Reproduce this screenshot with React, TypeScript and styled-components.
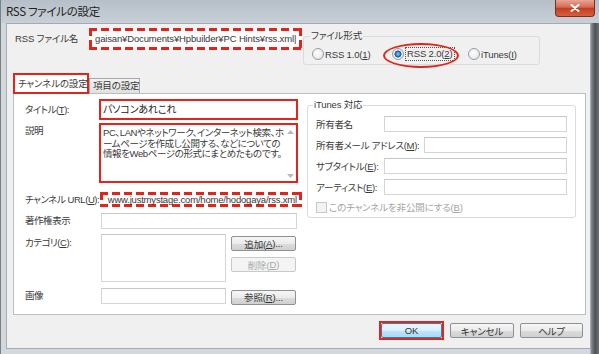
import React from "react";
import styled, { createGlobalStyle, css } from "styled-components";

const RED = "#e3241b";

const GlobalStyle = createGlobalStyle`
  html, body {
    margin: 0;
    padding: 0;
  }
  body {
    width: 599px;
    height: 354px;
    overflow: hidden;
    font-family: "Liberation Sans", "Noto Sans CJK JP", sans-serif;
    font-size: 9.5px;
    letter-spacing: -0.15px;
    font-feature-settings: "palt" 1;
    color: #3a3a3a;
  }
  * {
    box-sizing: border-box;
  }
`;

// red dashed annotation frame drawn with gradients, so dash size is controllable
const dashedRed = css`
  background:
    repeating-linear-gradient(90deg, ${RED} 0 8px, transparent 8px 12px) top left / 100% 3px no-repeat,
    repeating-linear-gradient(90deg, ${RED} 0 8px, transparent 8px 12px) bottom left / 100% 3px no-repeat,
    repeating-linear-gradient(180deg, ${RED} 0 8px, transparent 8px 12px) top left / 3px 100% no-repeat,
    repeating-linear-gradient(180deg, ${RED} 0 8px, transparent 8px 12px) top right / 3px 100% no-repeat,
    #fdfdfd;
`;

const App = (): JSX.Element => {
  return (
    <>
      <GlobalStyle />
      <Window>
        <TitleBar>
          <Title>RSS ファイルの設定</Title>
          <CloseButton>
            <svg width="10" height="8" viewBox="0 0 10 8">
              <path d="M1.5 1 L8.5 7 M8.5 1 L1.5 7" stroke="#fff" strokeWidth="2" strokeLinecap="round" />
            </svg>
          </CloseButton>
        </TitleBar>

        <Client>
          <FileRow>
            <FileLabel>RSS ファイル名</FileLabel>
            <PathField>gaisan¥Documents¥Hpbuilder¥PC Hints¥rss.xml|</PathField>
            <FormatGroup>
              <Legend>ファイル形式</Legend>
              <RadioRow>
                <RadioItem $w={80}>
                  <Radio />
                  <span>
                    RSS 1.0(<u>1</u>)
                  </span>
                </RadioItem>
                <RadioItem $w={76}>
                  <Radio $checked />
                  <FocusText>
                    RSS 2.0(<u>2</u>)
                  </FocusText>
                </RadioItem>
                <RadioItem>
                  <Radio />
                  <span>
                    iTunes(<u>I</u>)
                  </span>
                </RadioItem>
              </RadioRow>
              <Ellipse />
            </FormatGroup>
          </FileRow>

          <Tabs>
            <Tab $active>チャンネルの設定</Tab>
            <Tab>項目の設定</Tab>
          </Tabs>

          <Panel>
            <LeftCol>
              <FieldRow $mt={5} $h={21}>
                <FieldLabel>
                  タイトル(<u>T</u>):
                </FieldLabel>
                <TitleBox>パソコンあれこれ</TitleBox>
              </FieldRow>

              <FieldRow $mt={3} $h={60} $top>
                <FieldLabel $pt={2}>説明</FieldLabel>
                <DescBox>
                  <DescText>
                    PC、LANやネットワーク、インターネット検索、ホ
                    <br />
                    ームページを作成し公開する、などについての
                    <br />
                    情報をWebページの形式にまとめたものです。
                  </DescText>
                  <ScrollCol>
                    <svg width="7" height="4" viewBox="0 0 7 4">
                      <path d="M0 4 L3.5 0 L7 4 Z" fill="#b9b9b9" />
                    </svg>
                    <svg width="7" height="4" viewBox="0 0 7 4">
                      <path d="M0 0 L3.5 4 L7 0 Z" fill="#b9b9b9" />
                    </svg>
                  </ScrollCol>
                </DescBox>
              </FieldRow>

              <FieldRow $mt={9} $h={15}>
                <FieldLabel>
                  チャンネル URL(<u>U</u>):
                </FieldLabel>
                <UrlBox>
                  <span>www.justmystage.com/home/hodogaya/rss.xml</span>
                </UrlBox>
              </FieldRow>

              <FieldRow $mt={6} $h={16}>
                <FieldLabel>著作権表示</FieldLabel>
                <TextInput $w={196} $ml={2} />
              </FieldRow>

              <FieldRow $mt={5} $h={48} $top>
                <FieldLabel $pt={3}>
                  カテゴリ(<u>C</u>):
                </FieldLabel>
                <TextInput $w={125} $h={48} $ml={2} />
                <ButtonCol>
                  <Button $w={65}>
                    追加(<u>A</u>)...
                  </Button>
                  <Button $w={65} $disabled>
                    削除(<u>D</u>)
                  </Button>
                </ButtonCol>
              </FieldRow>

              <FieldRow $mt={6} $h={16}>
                <FieldLabel>画像</FieldLabel>
                <TextInput $w={125} $ml={2} />
                <ButtonCol>
                  <Button $w={65}>
                    参照(<u>R</u>)...
                  </Button>
                </ButtonCol>
              </FieldRow>
            </LeftCol>

            <ItunesGroup>
              <Legend $ml={-3}>iTunes 対応</Legend>
              <ItunesRow>
                <span>所有者名</span>
                <ItunesInput $w={183} />
              </ItunesRow>
              <ItunesRow>
                <span>
                  所有者メール アドレス(<u>M</u>):
                </span>
                <ItunesInput $w={143} />
              </ItunesRow>
              <ItunesRow>
                <span>
                  サブタイトル(<u>E</u>):
                </span>
                <ItunesInput $w={183} />
              </ItunesRow>
              <ItunesRow>
                <span>
                  アーティスト(<u>E</u>):
                </span>
                <ItunesInput $w={183} />
              </ItunesRow>
              <CheckRow>
                <CheckBox />
                <span>
                  このチャンネルを非公開にする(<u>B</u>)
                </span>
              </CheckRow>
            </ItunesGroup>
          </Panel>

          <Footer>
            <OkFrame>
              <Button $w={61} $primary>
                OK
              </Button>
            </OkFrame>
            <Button $w={64}>キャンセル</Button>
            <Button $w={63}>ヘルプ</Button>
          </Footer>
        </Client>
      </Window>
    </>
  );
};

export default App;

const Window = styled.div`
  width: 599px;
  height: 354px;
  display: flex;
  flex-direction: column;
  border-left: 1px solid #7b8086;
  background: linear-gradient(
    90deg,
    #d3d8dd 0,
    #d3d8dd 589px,
    #8c9096 590px,
    #4d5156 594px,
    #6e7277 598px
  );
`;

const TitleBar = styled.div`
  height: 23px;
  flex: none;
  display: flex;
  align-items: flex-start;
  background: linear-gradient(180deg, #b6bfc8 0%, #c8cfd6 100%);
`;

const Title = styled.div`
  padding-left: 5px;
  line-height: 23px;
  font-family: "Noto Sans CJK JP", sans-serif;
  font-size: 11.5px;
  color: #1f1f1f;
  letter-spacing: -0.3px;
`;

const CloseButton = styled.div`
  margin-left: auto;
  margin-right: 4px;
  width: 40px;
  height: 17px;
  display: flex;
  align-items: center;
  justify-content: center;
  border: 1px solid #7a2e24;
  border-top: none;
  border-radius: 0 0 4px 4px;
  background: linear-gradient(180deg, #e8a597 0%, #d56a52 45%, #c33d22 52%, #d65f3f 100%);
`;

const Client = styled.div`
  flex: 1;
  margin: 0 8px 5px 5px;
  display: flex;
  flex-direction: column;
  padding: 0 4px 0 6px;
  border: 1px solid #a2aab3;
  background: #f0f0f0;
`;

const FileRow = styled.div`
  height: 49px;
  flex: none;
  display: flex;
  align-items: flex-start;
  padding-top: 4px;
`;

const FileLabel = styled.div`
  margin-left: 2px;
  width: 74px;
  line-height: 22px;
  white-space: nowrap;
`;

const PathField = styled.div`
  width: 213px;
  height: 22px;
  padding-left: 6px;
  line-height: 22px;
  white-space: nowrap;
  overflow: hidden;
  ${dashedRed}
`;

const FormatGroup = styled.fieldset`
  position: relative;
  margin: 2px 0 0 1px;
  width: 237px;
  height: 35px;
  padding: 5px 6px 3px 6px;
  border: 1px solid #d3dde3;
  border-radius: 3px;
`;

const Legend = styled.legend<{ $ml?: number }>`
  padding: 0 1px;
  margin-left: ${({ $ml }) => $ml || 0}px;
  line-height: 12px;
`;

const RadioRow = styled.div`
  display: flex;
  align-items: center;
  height: 14px;
  margin-left: 2px;
`;

const RadioItem = styled.div<{ $w?: number }>`
  display: flex;
  align-items: center;
  gap: 1px;
  width: ${({ $w }) => ($w ? `${$w}px` : "auto")};
  white-space: nowrap;
`;

const Radio = styled.span<{ $checked?: boolean }>`
  width: 12px;
  height: 12px;
  flex: none;
  border-radius: 50%;
  border: 1px solid #979b9f;
  background: ${({ $checked }) =>
    $checked
      ? "radial-gradient(circle, #8fd6f8 0, #2c7dc2 2.2px, #17508c 3.3px, #f4f4f4 3.8px, #dfe2e5 100%)"
      : "radial-gradient(circle at 40% 35%, #ffffff 0, #eceef0 60%, #d6d9dc 100%)"};
`;

const FocusText = styled.span`
  border: 1px dotted #555;
  padding: 0 1px;
  line-height: 12px;
`;

const Ellipse = styled.div`
  position: absolute;
  left: 79px;
  top: 1px;
  width: 76px;
  height: 25px;
  border: 2px solid ${RED};
  border-radius: 50%;
  pointer-events: none;
`;

const Tabs = styled.div`
  height: 20px;
  flex: none;
  display: flex;
  align-items: flex-end;
`;

const Tab = styled.div<{ $active?: boolean }>`
  position: relative;
  white-space: nowrap;
  ${({ $active }) =>
    $active
      ? css`
          z-index: 1;
          width: 76px;
          height: 21px;
          margin-bottom: -1px;
          padding-left: 3px;
          line-height: 17px;
          border: 2px solid ${RED};
          background: #fff;
        `
      : css`
          width: 51px;
          height: 15px;
          padding-left: 3px;
          line-height: 14px;
          border: 1px solid #a4a8ac;
          border-bottom: none;
          background: linear-gradient(180deg, #f3f3f3, #e0e0e0);
        `}
`;

const Panel = styled.div`
  height: 222px;
  flex: none;
  display: flex;
  align-items: flex-start;
  padding-left: 11px;
  border: 1px solid #b9bec4;
  background: #fff;
`;

const LeftCol = styled.div`
  width: 277px;
  display: flex;
  flex-direction: column;
`;

const FieldRow = styled.div<{ $mt: number; $h: number; $top?: boolean }>`
  display: flex;
  align-items: ${({ $top }) => ($top ? "flex-start" : "center")};
  margin-top: ${({ $mt }) => $mt}px;
  height: ${({ $h }) => $h}px;
`;

const FieldLabel = styled.div<{ $pt?: number }>`
  width: 74px;
  flex: none;
  padding-top: ${({ $pt }) => $pt || 0}px;
  line-height: 12px;
  white-space: nowrap;
  letter-spacing: -0.45px;
`;

const TitleBox = styled.div`
  width: 199px;
  height: 21px;
  padding-left: 2px;
  line-height: 17px;
  font-size: 10px;
  border: 2px solid ${RED};
  background: #fff;
  color: #222;
`;

const DescBox = styled.div`
  width: 199px;
  height: 60px;
  display: flex;
  border: 2px solid ${RED};
  background: #fff;
`;

const DescText = styled.div`
  flex: 1;
  padding: 3px 0 0 2px;
  line-height: 10.5px;
  white-space: nowrap;
  overflow: hidden;
  letter-spacing: -0.4px;
`;

const ScrollCol = styled.div`
  width: 12px;
  flex: none;
  display: flex;
  flex-direction: column;
  align-items: center;
  justify-content: space-between;
  padding: 5px 0 3px;
`;

const UrlBox = styled.div`
  width: 203px;
  height: 15px;
  margin-left: 1px;
  display: flex;
  justify-content: flex-end;
  align-items: center;
  padding-right: 5px;
  overflow: hidden;
  white-space: nowrap;
  letter-spacing: -0.2px;
  ${dashedRed}
`;

const TextInput = styled.div<{ $w: number; $h?: number; $ml?: number }>`
  width: ${({ $w }) => $w}px;
  height: ${({ $h }) => $h || 16}px;
  margin-left: ${({ $ml }) => $ml || 0}px;
  flex: none;
  border: 1px solid #d2d5d9;
  border-top-color: #c3c7cc;
  background: #fff;
`;

const ButtonCol = styled.div`
  margin-left: 5px;
  padding-top: 2px;
  display: flex;
  flex-direction: column;
  gap: 6px;
`;

const Button = styled.div<{ $w: number; $disabled?: boolean; $primary?: boolean }>`
  width: ${({ $w }) => $w}px;
  height: 15px;
  display: flex;
  align-items: center;
  justify-content: center;
  white-space: nowrap;
  border-radius: 2px;
  border: 1px solid #8d9297;
  color: #333;
  background: linear-gradient(180deg, #f6f6f6 0%, #ebebeb 50%, #dcdcdc 51%, #d0d0d0 100%);
  ${({ $disabled }) =>
    $disabled &&
    css`
      color: #a8a8a8;
      border-color: #c7cacd;
      background: #f4f4f4;
    `}
  ${({ $primary }) =>
    $primary &&
    css`
      border-color: #3c7fb1;
      background: linear-gradient(180deg, #eaf6fd 0%, #d9f0fc 50%, #bee6fd 51%, #a7d9f5 100%);
    `}
`;

const ItunesGroup = styled.fieldset`
  margin: 5px 0 0 5px;
  width: 269px;
  height: 119px;
  padding: 5px 8px 4px 8px;
  border: 1px solid #d3dde3;
  border-radius: 3px;
  display: flex;
  flex-direction: column;
  gap: 5px;
`;

const ItunesRow = styled.div`
  display: flex;
  align-items: center;
  height: 16px;
  white-space: nowrap;
  letter-spacing: -0.3px;
`;

const ItunesInput = styled.div<{ $w: number }>`
  margin-left: auto;
  width: ${({ $w }) => $w}px;
  height: 16px;
  border: 1px solid #d2d5d9;
  border-top-color: #c3c7cc;
  background: #fff;
`;

const CheckRow = styled.div`
  margin-top: 1px;
  display: flex;
  align-items: center;
  gap: 2px;
  height: 12px;
  color: #a3a3a3;
  white-space: nowrap;
`;

const CheckBox = styled.span`
  width: 11px;
  height: 11px;
  border: 1px solid #c6c8ca;
  background: #f3f3f3;
`;

const Footer = styled.div`
  display: flex;
  justify-content: flex-end;
  align-items: center;
  gap: 6px;
  padding: 6px 3px 0 0;
`;

const OkFrame = styled.div`
  border: 2px solid ${RED};
`;
